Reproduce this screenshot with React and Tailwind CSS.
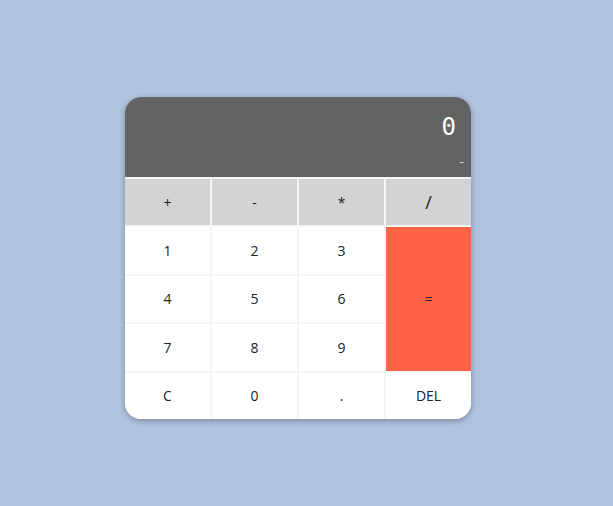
import React, { useState } from "react";

const ops = ["+", "-", "*", "/"];

export default function App() {
  const [current] = useState("0");
  const [previous] = useState("-");

  const btn =
    "flex items-center justify-center bg-white text-[14px] text-[#222]";

  return (
    <div
      className="min-h-screen w-full bg-[#b0c4de] pt-[97px] pl-[125px]"
      style={{ fontFamily: '"Open Sans", "Noto Sans", sans-serif' }}
    >
      <div className="w-[346px] h-[322px] grid grid-cols-[repeat(4,85px)] grid-rows-[80px_repeat(5,1fr)] gap-[2px] bg-[#f5f5f5] rounded-2xl overflow-hidden shadow-[0_2px_6px_rgba(0,0,0,0.3)]">
        {/* display */}
        <div className="col-span-4 bg-[#636363] flex flex-col items-end justify-between pt-[18px] pb-[8px]">
          <div
            className="text-white text-[24px] leading-none pr-[15px]"
            style={{ fontFamily: '"DejaVu Sans Mono", monospace' }}
          >
            {current}
          </div>
          <div className="text-white/75 text-[15px] leading-none pr-[7px]">
            {previous}
          </div>
        </div>

        {ops.map((op) => (
          <button
            key={op}
            className={`flex items-center justify-center bg-[#d3d3d3] text-[#222] ${
              op === "/" ? "text-[18px]" : "text-[14px]"
            }`}
          >
            {op}
          </button>
        ))}

        <button className={btn}>1</button>
        <button className={btn}>2</button>
        <button className={btn}>3</button>
        <button className="row-span-3 flex items-center justify-center bg-[#ff6347] text-[14px] text-[#222]">
          =
        </button>
        <button className={btn}>4</button>
        <button className={btn}>5</button>
        <button className={btn}>6</button>
        <button className={btn}>7</button>
        <button className={btn}>8</button>
        <button className={btn}>9</button>
        <button className={btn}>C</button>
        <button className={btn}>0</button>
        <button className={btn}>.</button>
        <button className={btn}>DEL</button>
      </div>
    </div>
  );
}
